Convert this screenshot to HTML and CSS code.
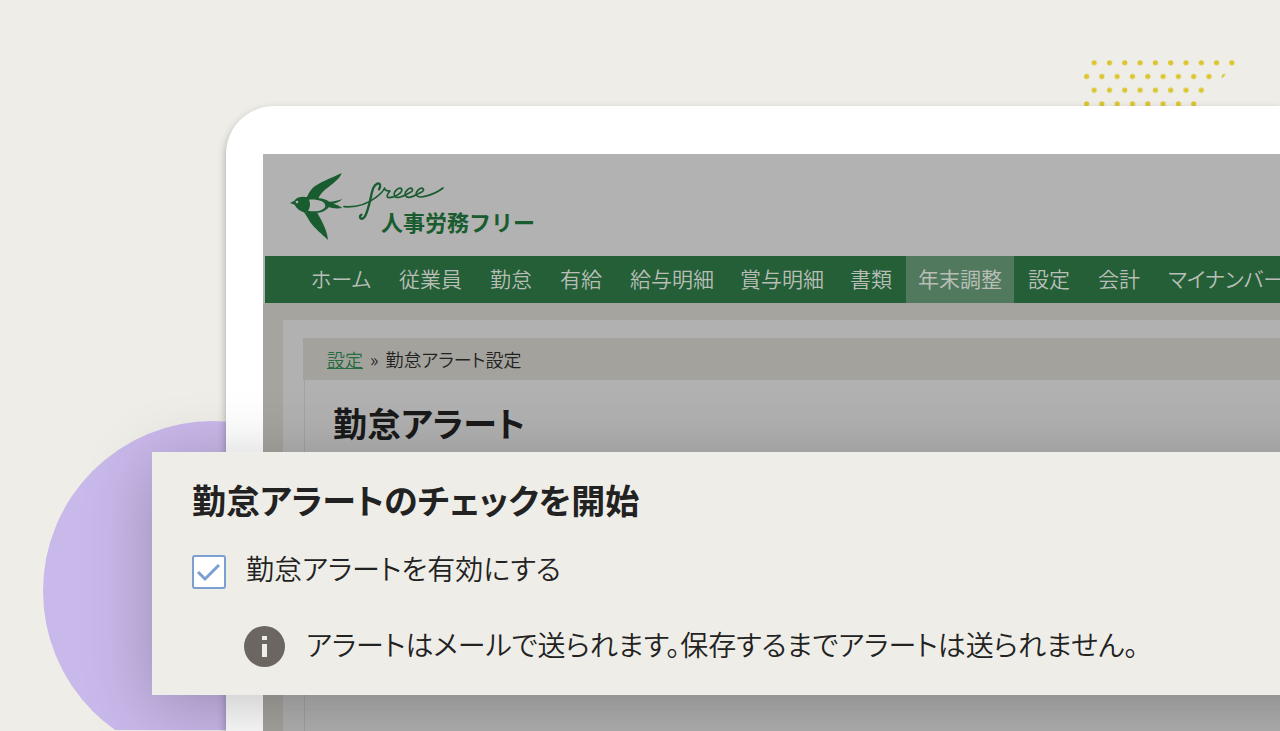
FILE: index.html
```html
<!DOCTYPE html>
<html lang="ja">
<head>
    <meta charset="UTF-8">
    <meta name="viewport" content="width=device-width, initial-scale=1">
    <title>勤怠アラート</title>
    <link rel="stylesheet" href="styles.css">
</head>
<body>
    <div class="scene">
        <div class="circle"></div>
        <svg class="dots" width="152" height="50" viewBox="0 0 152 50" aria-hidden="true">
            <defs>
                <pattern id="dot-grid" width="15.3" height="27.4" patternUnits="userSpaceOnUse">
                    <circle cx="10.2" cy="2.8" r="2.6"/>
                    <circle cx="2.6" cy="16.5" r="2.6"/>
                </pattern>
            </defs>
            <path d="M0 0H152V6L142 14L114 46V50H0Z" fill="url(#dot-grid)"/>
        </svg>

        <div class="device">
            <div class="screen">
                <header class="header">
                    <a class="logo" href="#">
                        <svg class="logo-mark" viewBox="30 36 465 210" aria-hidden="true">
                            <path d="M78 116C84 104 90 92 98 84C112 70 152 55 185 39C182 50 172 60 160 70C146 82 120 96 114 120Z"/>
                            <path d="M30 129L43 122C52 110 68 109 82 112C108 113 134 115 148 125C162 125 176 121 187 117C180 125 170 129 160 131C170 134 180 138 187 144C170 147 155 144 146 142C134 158 108 163 78 158C62 155 50 147 44 134Z"/>
                            <path class="belly" d="M87 119C112 117 136 123 136 138C134 151 112 157 84 152C91 142 92 130 87 119Z"/>
                            <circle class="belly" cx="51" cy="126" r="4"/>
                            <path d="M71 155C86 160 98 160 112 158C122 178 142 208 144 240C134 230 114 214 98 196C87 184 83 170 71 155Z"/>
                            <path class="script" d="M192 140C232 143 262 132 288 112C300 103 309 96 314 84C313 93 322 92 330 93C322 102 317 113 327 113C345 112 369 98 365 87C358 79 340 94 343 106C348 119 369 109 379 103C390 97 401 94 397 87C390 79 373 94 376 105C381 119 401 109 411 103C423 97 434 93 430 87C423 79 406 94 409 105C416 120 466 102 489 84"/>
                            <path class="script thick" d="M297 88C304 76 300 68 292 71C274 78 276 108 264 145C256 174 248 180 241 174C238 170 241 166 244 164"/>
                        </svg>
                        <span class="logo-text">人事労務フリー</span>
                    </a>
                </header>

                <nav class="nav">
                    <a href="#">ホーム</a>
                    <a href="#">従業員</a>
                    <a href="#">勤怠</a>
                    <a href="#">有給</a>
                    <a href="#">給与明細</a>
                    <a class="wide" href="#">賞与明細</a>
                    <a href="#">書類</a>
                    <a class="wide active" href="#">年末調整</a>
                    <a href="#">設定</a>
                    <a href="#">会計</a>
                    <a href="#">マイナンバー</a>
                </nav>

                <main class="content">
                    <div class="panel">
                        <div class="breadcrumb">
                            <a href="#">設定</a>
                            <span>»</span>
                            <span>勤怠アラート設定</span>
                        </div>
                        <div class="panel-body">
                            <h1>勤怠アラート</h1>
                        </div>
                    </div>
                </main>
            </div>
        </div>

        <section class="callout">
            <h2>勤怠アラートのチェックを開始</h2>
            <div class="check-row">
                <input type="checkbox" id="alert-enabled" checked>
                <label for="alert-enabled">勤怠アラートを有効にする</label>
            </div>
            <div class="info-row">
                <svg width="41" height="41" viewBox="0 0 41 41" aria-hidden="true">
                    <circle cx="20.5" cy="20.5" r="20.5" fill="#6b6760"/>
                    <path d="M18 10h5v4h-5zM18 18h5v13h-5z" fill="#eeede7"/>
                </svg>
                <p>アラートはメールで送られます。保存するまでアラートは送られません。</p>
            </div>
        </section>
    </div>
</body>
</html>
```

FILE: styles.css
```css
* {
    box-sizing: border-box;
}
body {
    margin: 0;
    background: #eeede7;
    color: #222;
    font-family: "Noto Sans CJK JP", sans-serif;
    font-feature-settings: "palt";
}
h1, h2, p {
    margin: 0;
}
.scene {
    position: relative;
    display: flex;
    min-height: 100vh;
    padding: 106px 0 0 226px;
    overflow: hidden;
}
.circle {
    position: absolute;
    left: 43px;
    top: 421px;
    width: 340px;
    height: 340px;
    border-radius: 50%;
    background: #c9b8ea;
    clip-path: inset(0 0 31px 0);
}
.dots {
    position: absolute;
    right: 44px;
    top: 60px;
    fill: #dcc62f;
}

/* device */
.device {
    position: relative;
    display: flex;
    flex: 1;
    min-width: 0;
    padding: 48px 0 0 37px;
    border-radius: 48px 0 0 0;
    background: #fff;
    box-shadow: 0 4px 8px rgba(0, 0, 0, 0.3);
}
.screen {
    display: flex;
    flex: 1;
    flex-direction: column;
    min-width: 0;
    overflow: hidden;
    background: #b2b2b2;
}
.header {
    height: 102px;
    padding: 18px 27px;
}
.logo {
    display: inline-grid;
    color: #185c2f;
    text-decoration: none;
}
.logo-mark,
.logo-text {
    grid-area: 1 / 1;
}
.logo-mark {
    width: 155px;
    height: 70px;
    fill: currentColor;
}
.logo-mark .belly {
    fill: #b2b2b2;
}
.logo-mark .script {
    fill: none;
    stroke: currentColor;
    stroke-width: 5;
    stroke-linecap: round;
    stroke-linejoin: round;
}
.logo-mark .thick {
    stroke-width: 7;
}
.logo-text {
    padding: 34px 0 0 91px;
    font-size: 22px;
    font-weight: 700;
    line-height: 30px;
    font-feature-settings: normal;
}
.nav {
    display: flex;
    height: 47px;
    margin-left: 2px;
    padding-left: 32px;
    background: #245f38;
    font-size: 21px;
    font-weight: 350;
    line-height: 45px;
    white-space: nowrap;
}
.nav a {
    padding: 0 14px;
    color: #b8beb6;
    text-decoration: none;
}
.nav .wide {
    padding: 0 12px;
}
.nav .active {
    background: #50795e;
    font-weight: 400;
}
.content {
    display: flex;
    flex: 1;
    padding: 17px 0 0 20px;
    background: #a6a49f;
}
.panel {
    flex: 1;
    padding: 18px 0 0 20px;
    background: #b1b1b1;
}
.breadcrumb {
    display: flex;
    gap: 7px;
    padding: 0 24px;
    background: #a4a29d;
    font-size: 18px;
    font-weight: 350;
    line-height: 42px;
}
.breadcrumb a {
    color: #286c41;
}
.panel-body {
    min-height: 352px;
    margin-left: 1px;
    padding: 20px 28px;
    border-left: 1px solid #a4a29d;
}
h1 {
    color: #1a1a1a;
    font-size: 34px;
    line-height: 46px;
}

/* callout */
.callout {
    position: absolute;
    left: 152px;
    right: -80px;
    top: 452px;
    padding: 24px 40px 28px;
    background: #eeede7;
    box-shadow: 0 12px 64px rgba(0, 0, 0, 0.24);
}
h2 {
    font-size: 34px;
    line-height: 48px;
}
.check-row {
    display: flex;
    align-items: center;
    gap: 20px;
    margin-top: 23px;
}
.check-row input {
    appearance: none;
    width: 34px;
    height: 34px;
    margin: 8px 0 0;
    border: 2px solid #7a9fd0;
    border-radius: 3px;
    background: #fff url('data:image/svg+xml,<svg xmlns="http://www.w3.org/2000/svg" viewBox="0 0 30 30"><path d="M4 15l7 7L25 8" fill="none" stroke="%237a9fd0" stroke-width="3"/></svg>') center / 30px 30px no-repeat;
}
.check-row label,
.info-row p {
    font-size: 28px;
    font-weight: 350;
    line-height: 40px;
}
.info-row {
    display: flex;
    align-items: flex-end;
    gap: 21px;
    margin-top: 35px;
    padding-left: 52px;
}
.info-row p {
    padding-bottom: 3px;
    white-space: nowrap;
}
```
